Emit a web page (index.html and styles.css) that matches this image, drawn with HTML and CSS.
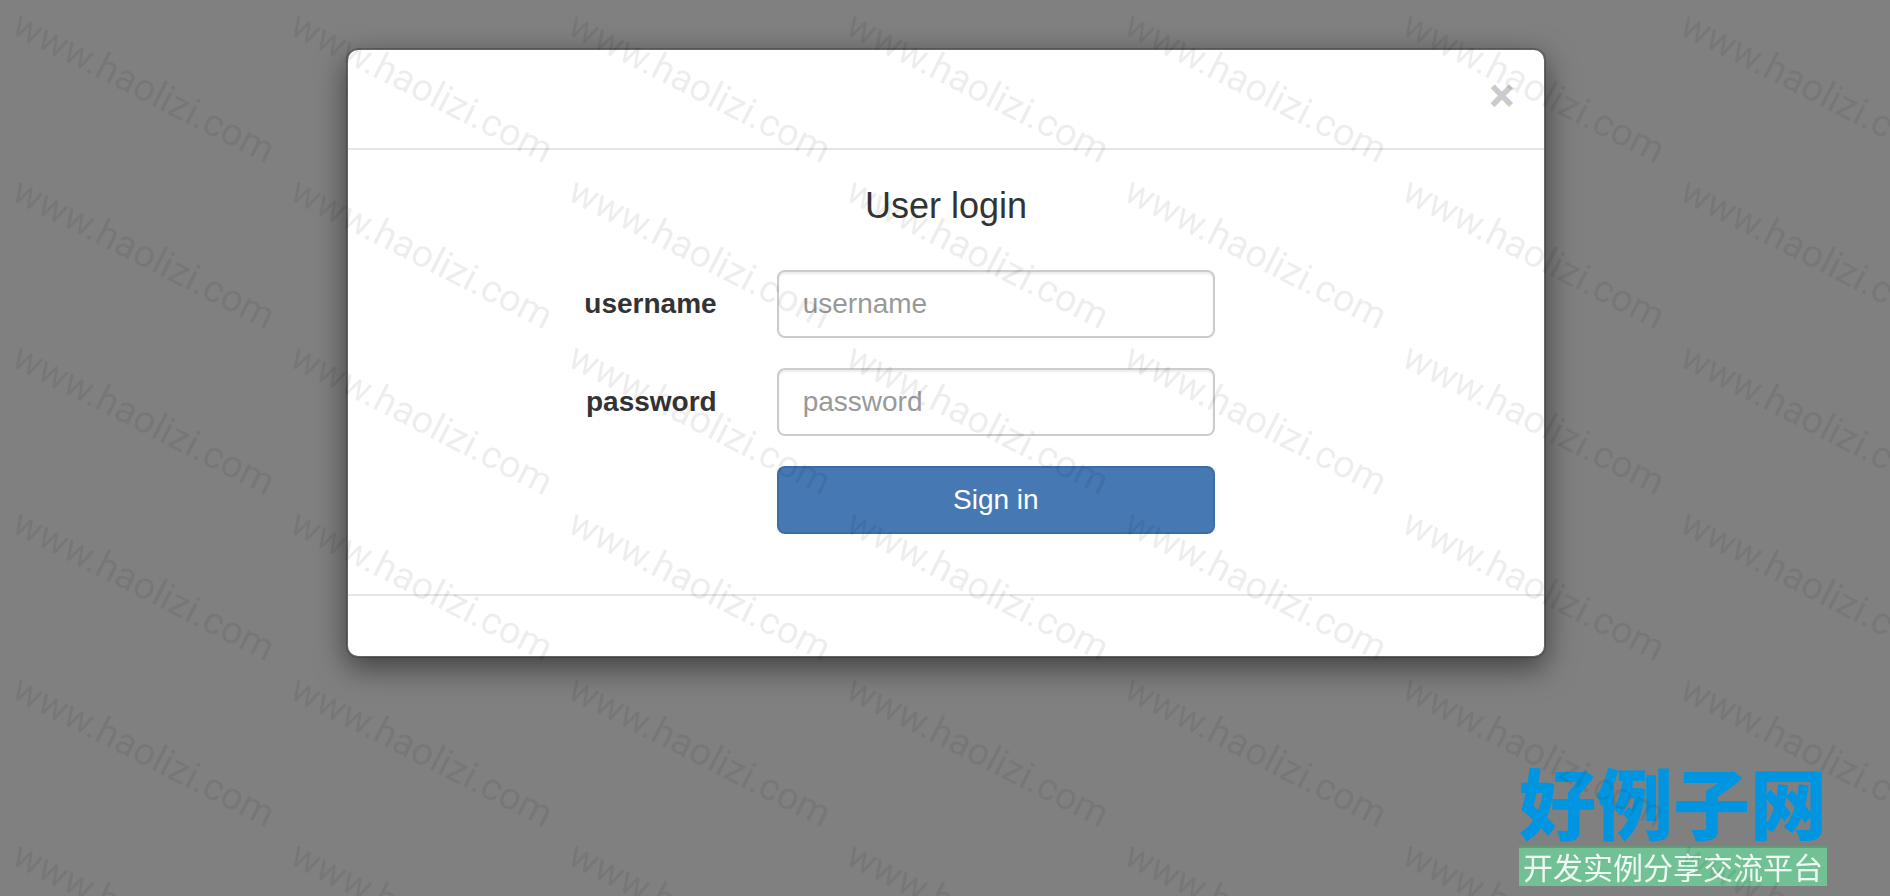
FILE: index.html
```
<!DOCTYPE html>
<html lang="en">

<head>
    <meta charset="UTF-8">
    <meta name="viewport" content="width=device-width, initial-scale=1.0">
    <title>User login</title>
    <link rel="stylesheet" href="styles.css">
</head>

<body>

    <main class="modal" role="dialog" aria-labelledby="login-title">
        <div class="modal-header">
            <button type="button" class="close" aria-label="Close">&times;</button>
        </div>
        <div class="modal-body">
            <h4 id="login-title">User login</h4>
            <form>
                <div class="form-group">
                    <label for="username">username</label>
                    <input type="text" id="username" name="username" placeholder="username">
                </div>
                <div class="form-group">
                    <label for="password">password</label>
                    <input type="password" id="password" name="password" placeholder="password">
                </div>
                <div class="form-group">
                    <button type="submit" class="btn">Sign in</button>
                </div>
            </form>
        </div>
        <div class="modal-footer"></div>
    </main>

    <div class="brand" lang="zh-CN">
        <div class="brand-name">好例子网</div>
        <div class="brand-slogan">开发实例分享交流平台</div>
    </div>

    <div class="watermark" id="watermark" aria-hidden="true"></div>

    <script>
        const watermark = document.getElementById('watermark');

        // Fill the window with watermark tiles
        function drawWatermark() {
            const columns = Math.ceil(window.innerWidth / 278);
            const rows = Math.ceil(window.innerHeight / 166);
            watermark.style.setProperty('--columns', columns);
            watermark.innerHTML = '<div class="tile"><span>www.haolizi.com</span></div>'.repeat(columns * rows);
        }

        drawWatermark();
        window.addEventListener('resize', drawWatermark);
    </script>

</body>

</html>
```
FILE: styles.css
```
* {
    box-sizing: border-box;
}

body {
    font-family: Arial, "Liberation Sans", sans-serif;
    font-size: 28px;
    line-height: 40px;
    background-color: #808080;
    margin: 0;
    padding: 48px 20px 48px 22px;
    color: #333;
}

.modal {
    max-width: 1200px;
    margin: 0 auto;
    background-color: white;
    background-clip: padding-box;
    border: 2px solid rgba(0, 0, 0, 0.2);
    border-radius: 12px;
    box-shadow: 0 10px 30px rgba(0, 0, 0, 0.5);
}

.modal-header {
    display: flex;
    justify-content: flex-end;
    padding: 25px 30px 31px;
    border-bottom: 2px solid #e5e5e5;
}

.close {
    padding: 0;
    background: none;
    border: none;
    color: black;
    font-family: inherit;
    font-size: 42px;
    font-weight: bold;
    line-height: 42px;
    opacity: 0.2;
    -webkit-text-stroke: 1px black;
    cursor: pointer;
}

.modal-body {
    padding: 30px 0;
}

h4 {
    margin: 6px 0 44px;
    font-size: 36px;
    font-weight: normal;
    line-height: 40px;
    text-align: center;
}

.form-group {
    display: grid;
    grid-template-columns: 4fr 5fr 3fr;
    align-items: center;
    margin-bottom: 30px;
}

.form-group label {
    padding-right: 30px;
    font-weight: bold;
    text-align: right;
}

.form-group input,
.btn {
    grid-column: 2;
    min-width: 0;
    height: 68px;
    margin: 0 30px;
    padding: 12px 24px;
    border: 2px solid #ccc;
    border-radius: 8px;
    font-family: inherit;
    font-size: 28px;
}

.form-group input {
    color: #555;
    box-shadow: inset 0 2px 2px rgba(0, 0, 0, 0.075);
}

.form-group input::placeholder {
    color: #999;
}

.btn {
    background-color: #4679b4;
    border-color: #3d6da5;
    color: white;
    cursor: pointer;
}

.modal-footer {
    height: 62px;
    border-top: 2px solid #e5e5e5;
}

.brand {
    position: fixed;
    right: 63px;
    bottom: 10px;
    font-family: "Noto Sans CJK SC", sans-serif;
    text-align: center;
    white-space: nowrap;
}

.brand-name {
    padding-bottom: 4px;
    color: #0095e0;
    font-size: 77px;
    font-weight: 900;
    line-height: 82px;
}

.brand-slogan {
    background-color: #72c194;
    border-top: 2px solid #639b7b;
    padding: 0 4px 2px;
    color: #f0faf4;
    font-size: 30px;
    line-height: 36px;
}

.watermark {
    position: fixed;
    inset: 0;
    display: grid;
    grid-template-columns: repeat(var(--columns), 278px);
    grid-auto-rows: 166px;
    overflow: hidden;
    pointer-events: none;
}

.tile {
    display: flex;
    align-items: center;
    justify-content: center;
    padding: 8px 0 0 10px;
    color: rgba(0, 0, 0, 0.07);
    font-family: Roboto, sans-serif;
    font-size: 38px;
}

.tile span {
    transform: rotate(27deg);
}
```
